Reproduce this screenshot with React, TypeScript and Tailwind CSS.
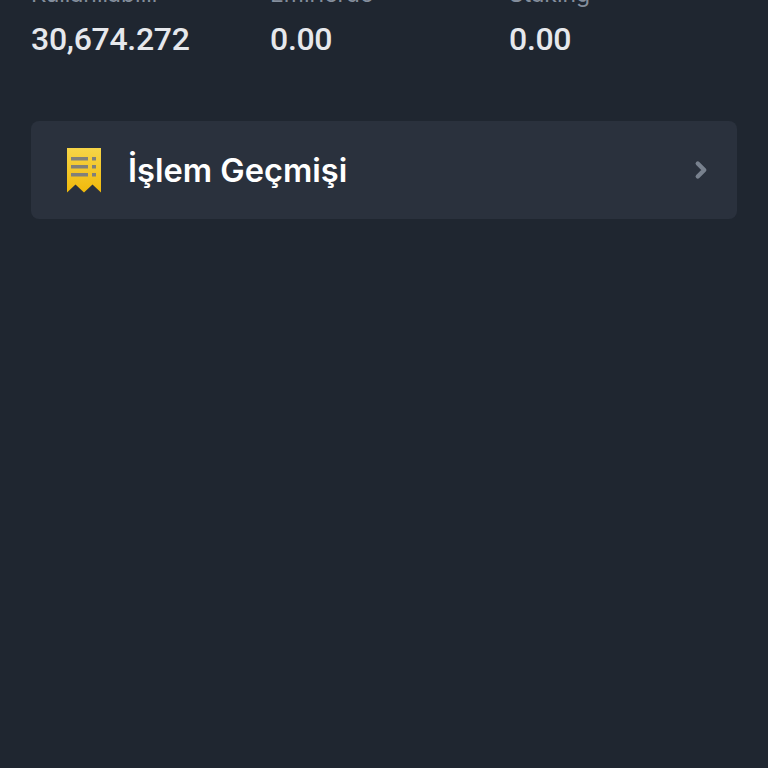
import React from 'react';
import { ChevronRight } from 'lucide-react';

const stats = [
  { label: 'Kullanılabilir', value: '30,674.272' },
  { label: 'Emirlerde', value: '0.00' },
  { label: 'Staking', value: '0.00' },
];

const ReceiptIcon = () => (
  <svg width="36" height="46" viewBox="0 0 36 46">
    <defs>
      <linearGradient id="receipt" x1="0" y1="0" x2="0" y2="1">
        <stop offset="0" stopColor="#f6d548" />
        <stop offset="1" stopColor="#f0b90b" />
      </linearGradient>
    </defs>
    <path d="M1 1H35V45.500L26.500 37.500L18 45.500L9.500 37.500L1 45.500Z" fill="url(#receipt)" />
    <rect x="5" y="10" width="17" height="3.500" fill="#80807a" />
    <rect x="5" y="18" width="17" height="3.500" fill="#80807a" />
    <rect x="5" y="26" width="17" height="3.500" fill="#80807a" />
    <rect x="26" y="10" width="4" height="3.500" fill="#80807a" />
    <rect x="26" y="18" width="4" height="3.500" fill="#80807a" />
    <rect x="26" y="26" width="4" height="3.500" fill="#80807a" />
  </svg>
);

export default function App() {
  return (
    <div className="h-[768px] w-[768px] overflow-hidden bg-[#1f2630] px-[31px] font-['Inter','Liberation_Sans',sans-serif]">
      <div className="-mt-[20px] grid grid-cols-[239px_239px_1fr]">
        {stats.map((s) => (
          <div key={s.label}>
            <div className="text-[23px] leading-[28px] text-[#848e9c]">{s.label}</div>
            <div className="mt-[13px] font-['Roboto','Liberation_Sans',sans-serif] text-[32px] leading-[36px] font-medium tracking-[-0.3px] text-[#e6e8ec]">{s.value}</div>
          </div>
        ))}
      </div>
      <div className="mt-[64px] flex h-[98px] items-center rounded-lg bg-[#2a313d] pr-[23px] pl-[35px]">
        <ReceiptIcon />
        <span className="ml-[26px] text-[32.6px] font-semibold text-white">İşlem Geçmişi</span>
        <ChevronRight size={26} strokeWidth={4} className="ml-auto text-[#78818e]" />
      </div>
    </div>
  );
}
